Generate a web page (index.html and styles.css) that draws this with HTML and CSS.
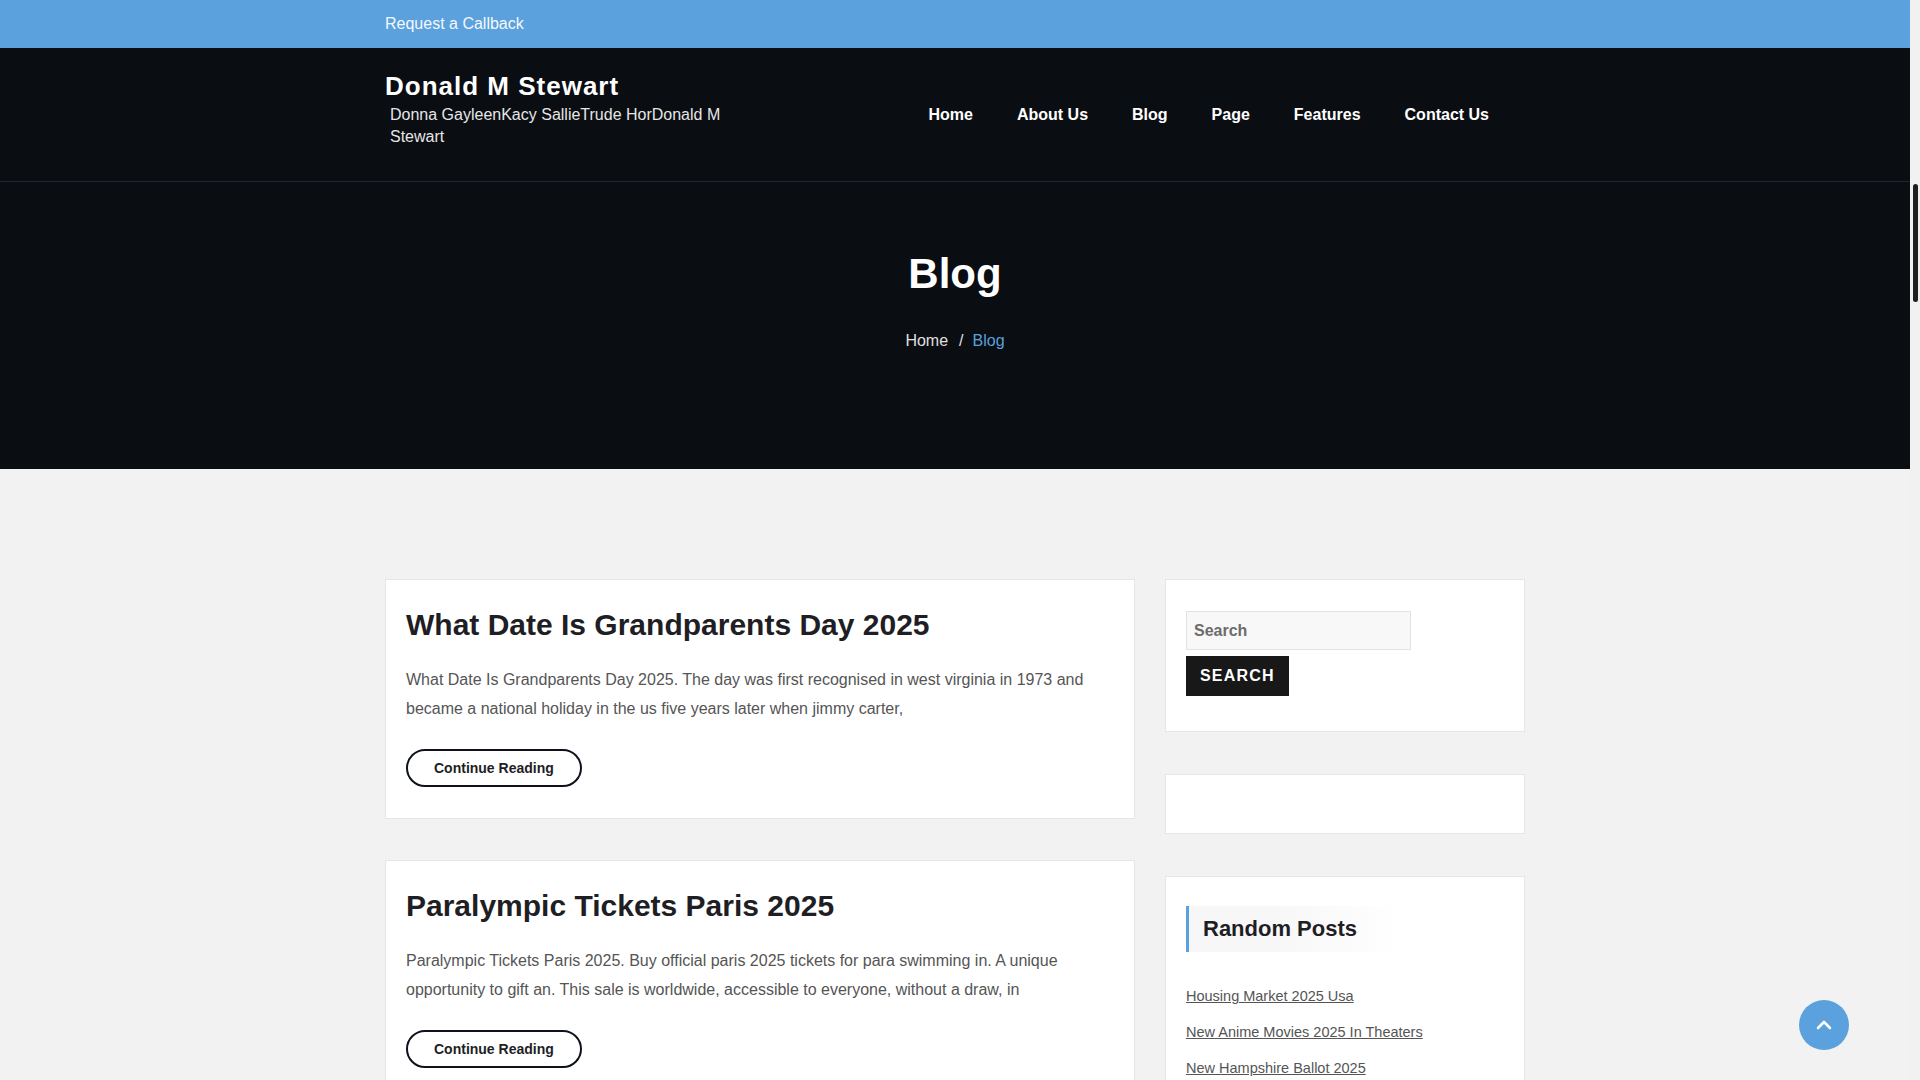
FILE: index.html
```html
<!DOCTYPE html>
<html lang="en">
<head>
<meta charset="utf-8">
<title>Blog - Donald M Stewart</title>
<link rel="stylesheet" href="styles.css">
</head>
<body>
<div class="topbar">
  <div class="container">
    <a class="callback" href="#">Request a Callback</a>
  </div>
</div>
<header class="site-header">
  <div class="container header-inner">
    <div class="branding">
      <div class="site-title">Donald M Stewart</div>
      <p class="tagline">Donna GayleenKacy SallieTrude HorDonald M Stewart</p>
    </div>
    <nav class="main-nav">
      <a href="#">Home</a>
      <a href="#">About Us</a>
      <a href="#">Blog</a>
      <a href="#">Page</a>
      <a href="#">Features</a>
      <a href="#">Contact Us</a>
    </nav>
  </div>
</header>
<section class="hero">
  <h1 class="hero-title">Blog</h1>
  <div class="breadcrumb"><a href="#">Home</a><span class="sep">/</span><span class="current">Blog</span></div>
</section>
<main class="content">
  <div class="container layout">
    <div class="posts">
      <article class="card post">
        <h2 class="post-title">What Date Is Grandparents Day 2025</h2>
        <p class="excerpt">What Date Is Grandparents Day 2025. The day was first recognised in west virginia in 1973 and became a national holiday in the us five years later when jimmy carter,</p>
        <a class="btn-read" href="#">Continue Reading</a>
      </article>
      <article class="card post">
        <h2 class="post-title">Paralympic Tickets Paris 2025</h2>
        <p class="excerpt">Paralympic Tickets Paris 2025. Buy official paris 2025 tickets for para swimming in. A unique opportunity to gift an. This sale is worldwide, accessible to everyone, without a draw, in</p>
        <a class="btn-read" href="#">Continue Reading</a>
      </article>
      <article class="card post">
        <h2 class="post-title">New Hampshire Ballot 2025</h2>
        <p class="excerpt">New Hampshire Ballot 2025. The state's ballot includes several measures for voters to consider this year.</p>
        <a class="btn-read" href="#">Continue Reading</a>
      </article>
    </div>
    <aside class="sidebar">
      <div class="card widget search-widget">
        <form class="search-form">
          <input class="search-input" type="text" placeholder="Search">
          <button class="search-btn" type="button">Search</button>
        </form>
      </div>
      <div class="card widget empty-widget"></div>
      <div class="card widget random-widget">
        <h3 class="widget-title">Random Posts</h3>
        <ul class="post-list">
          <li><a href="#">Housing Market 2025 Usa</a></li>
          <li><a href="#">New Anime Movies 2025 In Theaters</a></li>
          <li><a href="#">New Hampshire Ballot 2025</a></li>
          <li><a href="#">Paralympic Tickets Paris 2025</a></li>
        </ul>
      </div>
    </aside>
  </div>
</main>
<a class="to-top" href="#" aria-label="Back to top">
  <svg width="18" height="18" viewBox="0 0 18 18"><path d="M3 12 L9 6 L15 12" fill="none" stroke="#fff" stroke-width="2.6" stroke-linecap="round" stroke-linejoin="round"/></svg>
</a>
<div class="fake-scrollbar" aria-hidden="true"><div class="fake-thumb"></div></div>
</body>
</html>
```

FILE: styles.css
```css
* { box-sizing: border-box; }
html { background: #f1f1f1; }
html, body { margin: 0; padding: 0; }
body {
  margin-right: 10px;
  font-family: "Liberation Sans", Arial, sans-serif;
  font-size: 16px;
  color: #555;
  background: #f2f2f2;
}
a { text-decoration: none; color: inherit; }
.container {
  width: 1140px;
  margin: 0 auto;
}
.topbar {
  background: #5ba1dd;
  height: 48px;
}
.topbar .container {
  display: flex;
  align-items: center;
  height: 48px;
}
.callback {
  color: #f4f8fc;
  font-size: 16px;
  line-height: 20px;
}
.site-header {
  background: #0a0d12;
  border-bottom: 1px solid #22252b;
}
.header-inner {
  display: flex;
  align-items: center;
  height: 133px;
}
.branding {
  width: 350px;
  margin-top: -11px;
}
.site-title {
  color: #fff;
  font-size: 26px;
  font-weight: bold;
  letter-spacing: 1px;
  line-height: 30px;
}
.tagline {
  margin: 3px 0 0 5px;
  color: #e6e6e6;
  font-size: 16px;
  line-height: 22px;
}
.main-nav {
  margin-left: auto;
  margin-right: 36px;
  display: flex;
  gap: 44px;
  margin-top: 1px;
}
.main-nav a {
  color: #fff;
  font-weight: bold;
  font-size: 16px;
  line-height: 20px;
}
.hero {
  background: #0a0d12;
  height: 287px;
  padding-top: 67px;
  text-align: center;
}
.hero-title {
  margin: 0;
  color: #fff;
  font-size: 42px;
  line-height: 50px;
  font-weight: bold;
}
.breadcrumb {
  margin-top: 30px;
  font-size: 16px;
  line-height: 24px;
  color: #e0e0e0;
}
.breadcrumb .sep { margin: 0 9px 0 11px; }
.breadcrumb .current { color: #5ba1dd; }
.content {
  padding: 110px 0 60px;
}
.layout {
  display: grid;
  grid-template-columns: 750px 1fr;
  column-gap: 30px;
  align-items: start;
}
.posts {
  display: flex;
  flex-direction: column;
  gap: 41px;
}
.sidebar {
  display: flex;
  flex-direction: column;
  gap: 42px;
}
.card {
  background: #fff;
  border: 1px solid #e6e6e6;
}
.post {
  padding: 24px 20px 31px;
}
.post-title {
  margin: 0;
  color: #1e1e24;
  font-size: 30px;
  line-height: 42px;
  font-weight: bold;
}
.excerpt {
  margin: 19px 0 0;
  font-size: 16px;
  line-height: 29px;
  color: #555;
}
.btn-read {
  display: inline-block;
  margin-top: 26px;
  height: 38px;
  padding: 0 26px;
  border: 2px solid #0e131b;
  border-radius: 20px;
  color: #1e1e24;
  font-size: 14px;
  font-weight: bold;
  line-height: 34px;
}
.search-widget {
  padding: 31px 20px 35px;
}
.search-form {
  display: flex;
  flex-direction: column;
  align-items: flex-start;
  gap: 6px;
}
.search-input {
  width: 225px;
  height: 39px;
  border: 1px solid #e3e3e3;
  background: #f8f8f8;
  padding: 0 7px;
  font-family: "Liberation Sans", Arial, sans-serif;
  font-size: 16px;
  font-weight: bold;
  color: #555;
  outline: none;
}
.search-input::placeholder {
  color: #6c6c6c;
  font-weight: bold;
}
.search-btn {
  height: 40px;
  padding: 0 14px;
  border: none;
  background: #181818;
  color: #fff;
  font-family: "Liberation Sans", Arial, sans-serif;
  font-size: 16px;
  font-weight: bold;
  text-transform: uppercase;
  letter-spacing: 1.2px;
}
.empty-widget {
  height: 60px;
}
.random-widget {
  padding: 29px 20px 20px;
}
.widget-title {
  margin: 0;
  width: 215px;
  height: 46px;
  padding-left: 14px;
  border-left: 3px solid #5ba1dd;
  background: linear-gradient(to right, #f7f7f7 40%, rgba(247,247,247,0));
  color: #1e1e24;
  font-size: 22px;
  line-height: 46px;
  font-weight: bold;
}
.post-list {
  list-style: none;
  margin: 34px 0 0;
  padding: 0;
}
.post-list li {
  line-height: 20px;
  margin-bottom: 16px;
}
.post-list a {
  font-size: 14.5px;
  color: #555;
  text-decoration: underline;
}
.to-top {
  position: fixed;
  right: 71px;
  bottom: 30px;
  width: 50px;
  height: 50px;
  border-radius: 50%;
  background: #5ba1dd;
  display: flex;
  align-items: center;
  justify-content: center;
}
.fake-scrollbar {
  position: fixed;
  top: 0;
  right: 0;
  width: 10px;
  height: 100vh;
  background: #f1f1f1;
  padding: 184px 2px 0 3px;
}
.fake-thumb {
  height: 118px;
  border-radius: 3px;
  background: #1f1f1f;
}
```
